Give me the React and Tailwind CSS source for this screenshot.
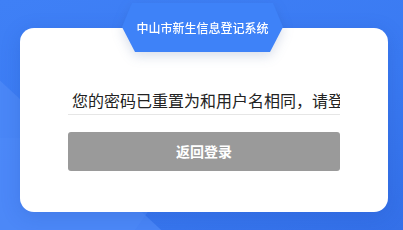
// Password reset notice card on blue backdrop.

export default function App() {
  return (
    <div
      className="relative w-full h-[230px] overflow-hidden bg-[linear-gradient(160deg,#3f80f6_0%,#3a7af2_55%,#3470e8_100%)]"
      style={{ fontFamily: '"Noto Sans CJK SC", "Noto Sans", sans-serif' }}
    >
      {/* Lighter diagonal plane at the bottom left */}
      <div className="absolute inset-0 bg-[#4d89f7] opacity-80 [clip-path:polygon(0_35%,40%_100%,0_100%)]" />
      <div className="absolute inset-0 bg-[#4f8bf8] [clip-path:polygon(0_60%,200px_60%,135px_100%,0_100%)] opacity-60" />

      <div className="relative ml-[20px] mt-[28px] w-[368px] h-[184px] bg-white rounded-[14px] shadow-[0_4px_20px_rgba(20,60,160,0.18)] px-[48px] pt-[59px]">
        {/* Title tab */}
        <div className="absolute left-[102px] top-[-25px] drop-shadow-[0_4px_6px_rgba(40,70,140,0.18)]">
          <div className="w-[161px] h-[49px] bg-[#3e82f8] flex items-center justify-center text-white text-[12px] font-medium [clip-path:polygon(10px_0,151px_0,161px_24px,148px_49px,13px_49px,0_24px)]">
            中山市新生信息登记系统
          </div>
        </div>

        <div className="h-[28px] border-b border-[#e6e6e6] overflow-hidden whitespace-nowrap pl-[4px] text-[16px] leading-[26px] text-[#222]">
          您的密码已重置为和用户名相同，请登录后及时修改密码
        </div>

        <button className="mt-[17px] w-full h-[39px] rounded-[3px] bg-[#9a9a9a] text-white text-[14px] font-bold">
          返回登录
        </button>
      </div>
    </div>
  );
}
